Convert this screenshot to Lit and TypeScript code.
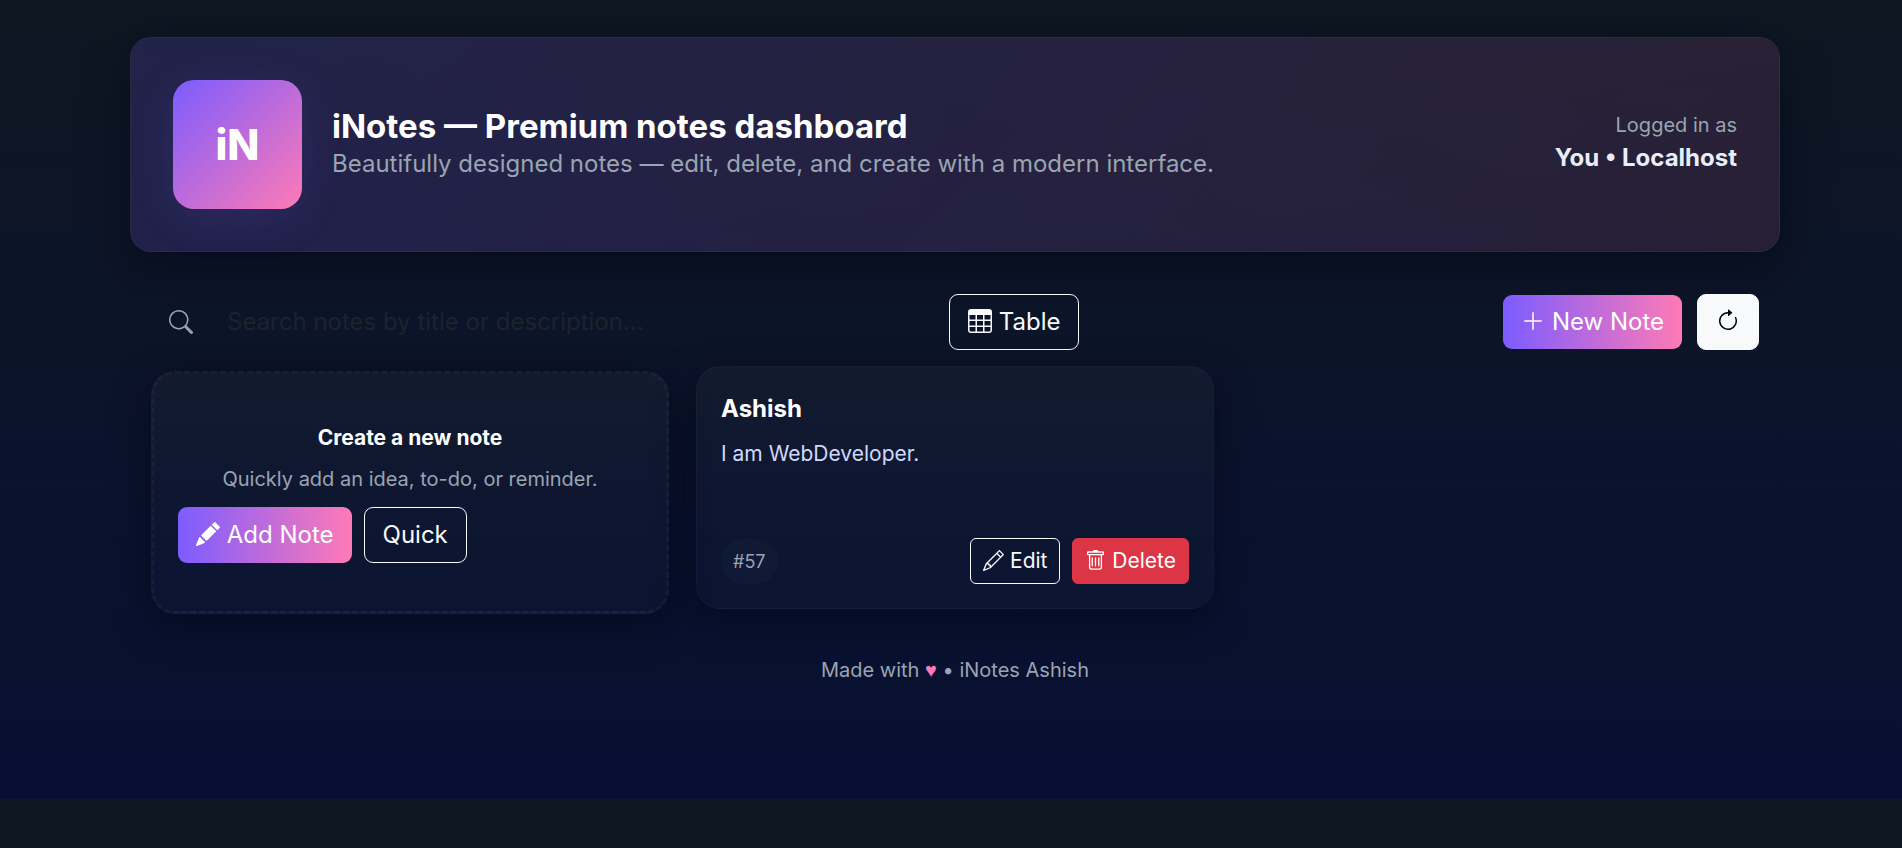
import { LitElement, html, css, svg } from "lit";
import { customElement, property, state } from "lit/decorators.js";

const ICONS: Record<string, string[]> = {
  search: [
    "M11.742 10.344a6.5 6.5 0 1 0-1.397 1.398h-.001q.044.06.098.115l3.85 3.85a1 1 0 0 0 1.415-1.414l-3.85-3.85a1 1 0 0 0-.115-.1zM12 6.5a5.5 5.5 0 1 1-11 0 5.5 5.5 0 0 1 11 0",
  ],
  table: [
    "M0 2a2 2 0 0 1 2-2h12a2 2 0 0 1 2 2v12a2 2 0 0 1-2 2H2a2 2 0 0 1-2-2zm15 2h-4v3h4zm0 4h-4v3h4zm0 4h-4v3h3a1 1 0 0 0 1-1zm-5 3v-3H6v3zm-5 0v-3H1v2a1 1 0 0 0 1 1zm-4-4h4V8H1zm0-4h4V4H1zm5-3v3h4V4zm4 4H6v3h4z",
  ],
  plus: [
    "M8 2a.5.5 0 0 1 .5.5v5h5a.5.5 0 0 1 0 1h-5v5a.5.5 0 0 1-1 0v-5h-5a.5.5 0 0 1 0-1h5v-5A.5.5 0 0 1 8 2",
  ],
  refresh: [
    "M8 3a5 5 0 1 0 4.546 2.914.5.5 0 0 1 .908-.417A6 6 0 1 1 8 2z",
    "M8 4.466V.534a.25.25 0 0 1 .41-.192l2.36 1.966c.12.1.12.284 0 .384L8.41 4.658A.25.25 0 0 1 8 4.466",
  ],
  pencilFill: [
    "M12.854.146a.5.5 0 0 0-.707 0L10.5 1.793 14.207 5.5l1.647-1.646a.5.5 0 0 0 0-.708zm.646 6.061L9.793 2.5 3.293 9H3.5a.5.5 0 0 1 .5.5v.5h.5a.5.5 0 0 1 .5.5v.5h.5a.5.5 0 0 1 .5.5v.5h.5a.5.5 0 0 1 .5.5v.207zm-7.468 7.468A.5.5 0 0 1 6 13.5V13h-.5a.5.5 0 0 1-.5-.5V12h-.5a.5.5 0 0 1-.5-.5V11h-.5a.5.5 0 0 1-.5-.5V10h-.5a.5.5 0 0 1-.175-.032l-.179.178a.5.5 0 0 0-.11.168l-2 5a.5.5 0 0 0 .65.65l5-2a.5.5 0 0 0 .168-.11z",
  ],
  pencil: [
    "M12.146.146a.5.5 0 0 1 .708 0l3 3a.5.5 0 0 1 0 .708l-10 10a.5.5 0 0 1-.168.11l-5 2a.5.5 0 0 1-.65-.65l2-5a.5.5 0 0 1 .11-.168zM11.207 2.5 13.5 4.793 14.793 3.5 12.5 1.207zm1.586 3L10.5 3.207 4 9.707V10h.5a.5.5 0 0 1 .5.5v.5h.5a.5.5 0 0 1 .5.5v.5h.293zm-9.761 5.175-.106.106-1.528 3.821 3.821-1.528.106-.106A.5.5 0 0 1 5 12.5V12h-.5a.5.5 0 0 1-.5-.5V11h-.5a.5.5 0 0 1-.468-.325",
  ],
  trash: [
    "M5.5 5.5A.5.5 0 0 1 6 6v6a.5.5 0 0 1-1 0V6a.5.5 0 0 1 .5-.5m2.5 0a.5.5 0 0 1 .5.5v6a.5.5 0 0 1-1 0V6a.5.5 0 0 1 .5-.5m3 .5a.5.5 0 0 0-1 0v6a.5.5 0 0 0 1 0z",
    "M14.5 3a1 1 0 0 1-1 1H13v9a2 2 0 0 1-2 2H5a2 2 0 0 1-2-2V4h-.5a1 1 0 0 1-1-1V2a1 1 0 0 1 1-1H6a1 1 0 0 1 1-1h2a1 1 0 0 1 1 1h3.5a1 1 0 0 1 1 1zM4.118 4 4 4.059V13a1 1 0 0 0 1 1h6a1 1 0 0 0 1-1V4.059L11.882 4zM2.5 3h11V2h-11z",
  ],
};

const icon = (name: string) => html`<svg
  class="icon"
  viewBox="0 0 16 16"
  fill="currentColor"
  aria-hidden="true"
>${ICONS[name].map((d) => svg`<path d=${d}></path>`)}</svg>`;

const shared = css`
  * {
    box-sizing: border-box;
  }
  .icon {
    width: 1em;
    height: 1em;
    vertical-align: -0.125em;
  }
  .btn {
    display: inline-block;
    padding: 9px 18px;
    border: 1px solid transparent;
    border-radius: 9px;
    background: transparent;
    font-family: inherit;
    font-size: 24px;
    font-weight: 400;
    line-height: 36px;
    white-space: nowrap;
    cursor: pointer;
  }
  .btn-sm {
    padding: 6px 12px;
    border-radius: 6px;
    font-size: 21px;
    line-height: 32px;
  }
  .btn-outline {
    border-color: #f8f9fa;
    color: #f8f9fa;
  }
  .btn-accent {
    border: 0;
    background: linear-gradient(90deg, #7c5cff, #ff7ab6);
    color: #fff;
  }
  .btn-light {
    background: #f8f9fa;
    border-color: #f8f9fa;
    color: #000;
  }
  .btn-danger {
    background: #dc3545;
    border-color: #dc3545;
    color: #fff;
  }
  .card {
    display: flex;
    flex-direction: column;
    min-height: 243px;
    padding: 24px;
    border: 1px solid rgba(255, 255, 255, 0.03);
    border-radius: 24px;
    background: linear-gradient(
      180deg,
      rgba(255, 255, 255, 0.03),
      rgba(255, 255, 255, 0.01)
    );
    box-shadow: 0 12px 36px rgba(2, 6, 23, 0.6);
  }
`;

interface Note {
  id: number;
  title: string;
  body: string;
}

@customElement("note-card")
export class NoteCard extends LitElement {
  @property({ attribute: false }) note!: Note;

  static styles = [
    shared,
    css`
      :host {
        display: block;
      }
      .title {
        margin: 0;
        font-size: 24px;
        line-height: 36px;
        font-weight: 700;
        color: #fff;
      }
      .body {
        margin: 9px 0 0;
        flex: 1;
        font-size: 21px;
        line-height: 36px;
        color: #cfd8ff;
      }
      .foot {
        display: flex;
        justify-content: space-between;
        align-items: center;
      }
      .tag {
        padding: 9px 12px;
        border-radius: 23px;
        background: rgba(255, 255, 255, 0.02);
        font-size: 18px;
        line-height: 27px;
        color: #9aa4b2;
      }
      .actions {
        display: flex;
        gap: 12px;
      }
    `,
  ];

  render() {
    return html`<article class="card">
      <h2 class="title">${this.note.title}</h2>
      <p class="body">${this.note.body}</p>
      <div class="foot">
        <span class="tag">#${this.note.id}</span>
        <div class="actions">
          <button class="btn btn-sm btn-outline" type="button">${icon("pencil")} Edit</button>
          <button class="btn btn-sm btn-danger" type="button">${icon("trash")} Delete</button>
        </div>
      </div>
    </article>`;
  }
}

@customElement("app-root")
export class AppRoot extends LitElement {
  @state() private notes: Note[] = [
    { id: 57, title: "Ashish", body: "I am WebDeveloper." },
  ];
  @state() private activeId = 57;

  static styles = [
    shared,
    css`
      :host {
        display: block;
        min-height: 100vh;
        background: #0f1722;
        font-family: Inter, "Liberation Sans", sans-serif;
        font-size: 24px;
        line-height: 36px;
        color: #e6eef8;
      }
      .page {
        padding: 37px 122px 114px 130px;
        background: linear-gradient(180deg, #0f1722, #071033);
      }
      .container {
        max-width: 1650px;
        margin: 0 auto;
      }
      .hero {
        display: flex;
        align-items: center;
        gap: 30px;
        padding: 42px;
        border: 1px solid rgba(255, 255, 255, 0.04);
        border-radius: 21px;
        background: linear-gradient(
          135deg,
          rgba(124, 92, 255, 0.18),
          rgba(255, 122, 182, 0.11)
        );
        box-shadow: 0 12px 45px rgba(2, 6, 23, 0.6);
      }
      .logo {
        display: grid;
        place-items: center;
        width: 129px;
        height: 129px;
        border-radius: 21px;
        background: linear-gradient(135deg, #7c5cff, #ff7ab6);
        box-shadow: 0 9px 45px rgba(124, 92, 255, 0.14);
        font-size: 42px;
        font-weight: 800;
        color: #fff;
      }
      .intro {
        flex: 1;
      }
      .heading {
        margin: 0;
        font-size: 33px;
        line-height: 39px;
        font-weight: 700;
        color: #fff;
      }
      .lead {
        margin: 0;
        color: #9aa4b2;
      }
      .account {
        padding-bottom: 3px;
        text-align: right;
      }
      .muted {
        font-size: 20px;
        line-height: 30px;
        color: #9aa4b2;
      }
      .user {
        font-weight: 700;
      }
      .content {
        padding: 42px 21px 0;
      }
      .toolbar {
        display: flex;
        align-items: center;
        justify-content: space-between;
      }
      .search {
        display: flex;
        align-items: center;
        width: 780px;
        padding-left: 18px;
        color: #9aa4b2;
      }
      .field {
        flex: 1;
        min-width: 0;
        margin-left: 16px;
        padding: 9px 18px;
        border: 0;
        outline: 0;
        background: transparent;
        font: inherit;
        color: #e6eef8;
      }
      .field::placeholder {
        color: #1c232d;
        opacity: 1;
      }
      .tools {
        display: flex;
        flex: 1;
        align-items: center;
        justify-content: space-between;
        margin-left: 18px;
      }
      .group {
        display: flex;
        align-items: center;
        gap: 15px;
      }
      .grid {
        display: grid;
        grid-template-columns: repeat(3, 1fr);
        gap: 27px;
        margin-top: 21px;
      }
      .create {
        justify-content: center;
        border: 3px dashed rgba(255, 255, 255, 0.04);
      }
      .create-title {
        margin: 0;
        text-align: center;
        font-size: 21px;
        line-height: 32px;
        font-weight: 700;
        color: #fff;
      }
      .create-text {
        margin: 10px 0 13px;
        text-align: center;
      }
      .create-actions {
        display: flex;
        gap: 12px;
      }
      .active {
        transform: translateY(-5px);
      }
      .footer {
        margin-top: 41px;
        text-align: center;
      }
      .heart {
        font-family: "Liberation Sans", sans-serif;
        color: #ff7ab6;
      }
    `,
  ];

  render() {
    return html`<div class="page">
      <div class="container">
        <header class="hero">
          <div class="logo">iN</div>
          <div class="intro">
            <h1 class="heading">iNotes — Premium notes dashboard</h1>
            <p class="lead">Beautifully designed notes — edit, delete, and create with a modern interface.</p>
          </div>
          <div class="account">
            <div class="muted">Logged in as</div>
            <div class="user">You • Localhost</div>
          </div>
        </header>
        <main class="content">
          <div class="toolbar">
            <label class="search">
              ${icon("search")}
              <input class="field" type="text" aria-label="Search notes" placeholder="Search notes by title or description..." />
            </label>
            <div class="tools">
              <button class="btn btn-outline" type="button">${icon("table")} Table</button>
              <div class="group">
                <button class="btn btn-accent" type="button">${icon("plus")} New Note</button>
                <button class="btn btn-light" type="button" aria-label="Refresh">${icon("refresh")}</button>
              </div>
            </div>
          </div>
          <div class="grid">
            <section class="card create">
              <h2 class="create-title">Create a new note</h2>
              <p class="create-text muted">Quickly add an idea, to-do, or reminder.</p>
              <div class="create-actions">
                <button class="btn btn-accent" type="button">${icon("pencilFill")} Add Note</button>
                <button class="btn btn-outline" type="button">Quick</button>
              </div>
            </section>
            ${this.notes.map(
              (n) => html`<note-card class=${n.id === this.activeId ? "active" : ""} .note=${n}></note-card>`
            )}
          </div>
        </main>
        <footer class="footer muted">Made with <span class="heart">♥</span> • iNotes Ashish</footer>
      </div>
    </div>`;
  }
}
